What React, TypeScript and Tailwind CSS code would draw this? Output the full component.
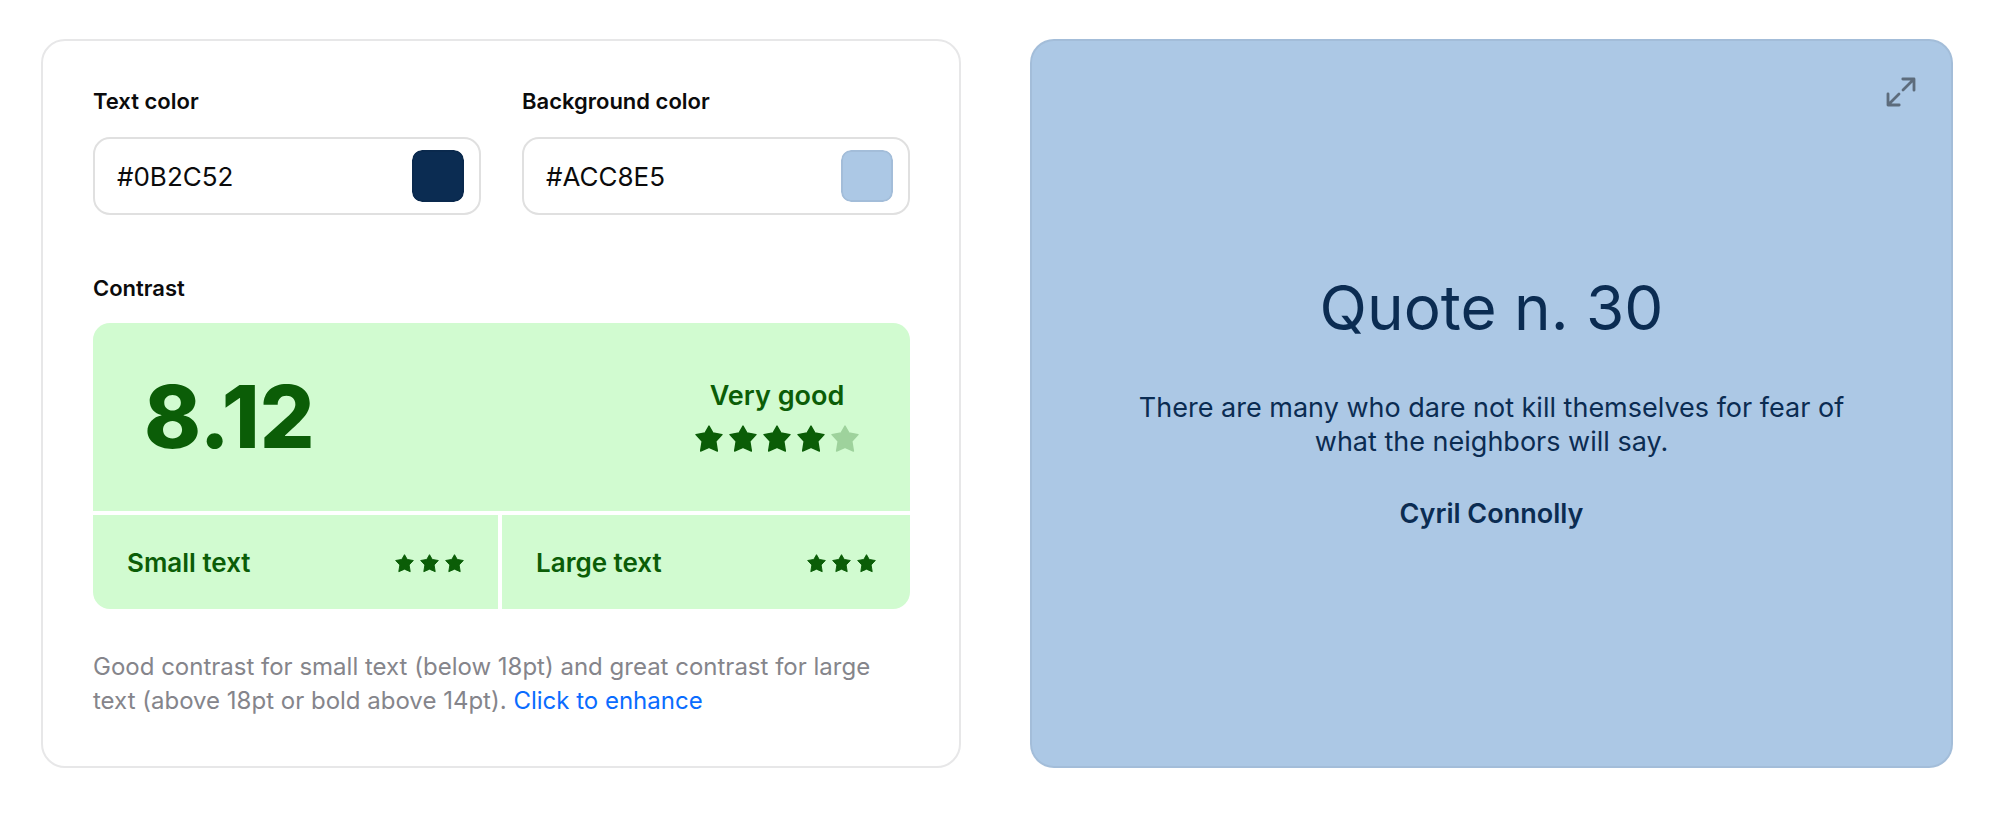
import { useState } from "react";

function Star({ className }: { className: string }) {
  return (
    <svg viewBox="0 0 28 27" className={className} aria-hidden="true">
      <path
        d="M14 1 18 8 27 9.6 20.8 16.2 22.4 26 14 22.4 5.6 26 7.2 16.2 1 9.6 10 8Z"
        fill="currentColor"
        stroke="currentColor"
        strokeWidth="1.4"
        strokeLinejoin="round"
      />
    </svg>
  );
}

type ColorFieldProps = {
  id: string;
  label: string;
  value: string;
  onChange: (value: string) => void;
};

function ColorField({ id, label, value, onChange }: ColorFieldProps) {
  return (
    <div className="min-w-0">
      <label htmlFor={id} className="block text-[22px] leading-[34px] font-semibold">
        {label}
      </label>
      <div className="mt-[19px] flex h-[78px] items-center rounded-[17px] border-2 border-[#e0e0e0] pr-[15px] pl-[22px]">
        <input
          id={id}
          type="text"
          value={value}
          onChange={(e) => onChange(e.target.value)}
          className="min-w-0 flex-1 bg-transparent text-[26px] outline-none"
        />
        <input
          type="color"
          aria-label={`${label} picker`}
          value={value.toLowerCase()}
          onChange={(e) => onChange(e.target.value.toUpperCase())}
          className="size-[52px] shrink-0 cursor-pointer appearance-none rounded-[10px] bg-transparent p-0 [&::-webkit-color-swatch]:rounded-[10px] [&::-webkit-color-swatch]:border-2 [&::-webkit-color-swatch]:border-black/5 [&::-webkit-color-swatch-wrapper]:p-0"
        />
      </div>
    </div>
  );
}

function SizeRating({ label }: { label: string }) {
  return (
    <div className="flex h-[94px] items-center justify-between bg-[#d1fbd0] px-[34px]">
      <span className="text-[26px] font-semibold">{label}</span>
      <span className="flex gap-[6px] pt-[3px]">
        <Star className="w-[19px]" />
        <Star className="w-[19px]" />
        <Star className="w-[19px]" />
      </span>
    </div>
  );
}

export default function App() {
  const [text, setText] = useState("#0B2C52");
  const [background, setBackground] = useState("#ACC8E5");

  return (
    <main className="grid grid-cols-[920fr_923fr] gap-[69px] bg-white pt-[39px] pr-[46px] pb-[64px] pl-[41px] font-['Inter',sans-serif] text-[#0b0b0c]">
      <section className="rounded-[24px] border-2 border-[#e7e7e8] pt-[43px] pr-[49px] pb-[48px] pl-[50px]">
        <div className="grid grid-cols-2 gap-[41px]">
          <ColorField id="text-color" label="Text color" value={text} onChange={setText} />
          <ColorField
            id="background-color"
            label="Background color"
            value={background}
            onChange={setBackground}
          />
        </div>

        <h2 className="mt-[56px] text-[22px] leading-[34px] font-semibold">Contrast</h2>
        <div className="mt-[18px] grid grid-cols-[405fr_408fr] gap-[4px] overflow-hidden rounded-[17px] text-[#0b5d07]">
          <div className="col-span-2 flex h-[188px] items-center justify-between bg-[#d1fbd0] px-[51px]">
            <span className="text-[86px] leading-none font-extrabold">8.12</span>
            <div className="flex flex-col items-center gap-[12px] pb-[3px]">
              <span className="text-[27px] leading-[34px] font-semibold">Very good</span>
              <span className="flex gap-[6px]">
                <Star className="w-[28px]" />
                <Star className="w-[28px]" />
                <Star className="w-[28px]" />
                <Star className="w-[28px]" />
                <Star className="w-[28px] opacity-25" />
              </span>
            </div>
          </div>
          <SizeRating label="Small text" />
          <SizeRating label="Large text" />
        </div>

        <p className="mt-[41px] text-[24px] leading-[34px] text-[#85858b]">
          Good contrast for small text (below 18pt) and great contrast for large text (above 18pt or
          bold above 14pt).{" "}
          <a href="#enhance" className="text-[#0a6cff]">
            Click to enhance
          </a>
        </p>
      </section>

      <section
        className="relative flex flex-col items-center justify-center rounded-[24px] border-2 border-black/5 px-[100px] text-center"
        style={{ backgroundColor: background, color: text }}
      >
        <button
          type="button"
          aria-label="Full screen"
          className="absolute top-[36px] right-[35px] cursor-pointer text-[#5d6c7c]"
        >
          <svg
            viewBox="0 0 30 30"
            className="size-[30px]"
            fill="none"
            stroke="currentColor"
            strokeWidth="2.8"
            strokeLinecap="round"
            strokeLinejoin="round"
            aria-hidden="true"
          >
            <path d="M16.8 2H28V13.2M28 2 17 13M2 16.8V28H13.2M2 28 13 17" />
          </svg>
        </button>
        <h1 className="text-[62px] leading-[64px]">Quote n. 30</h1>
        <p className="mt-[51px] text-[27px] leading-[34px]">
          There are many who dare not kill themselves for fear of what the neighbors will say.
        </p>
        <p className="mt-[38px] text-[27px] leading-[34px] font-semibold">Cyril Connolly</p>
      </section>
    </main>
  );
}
